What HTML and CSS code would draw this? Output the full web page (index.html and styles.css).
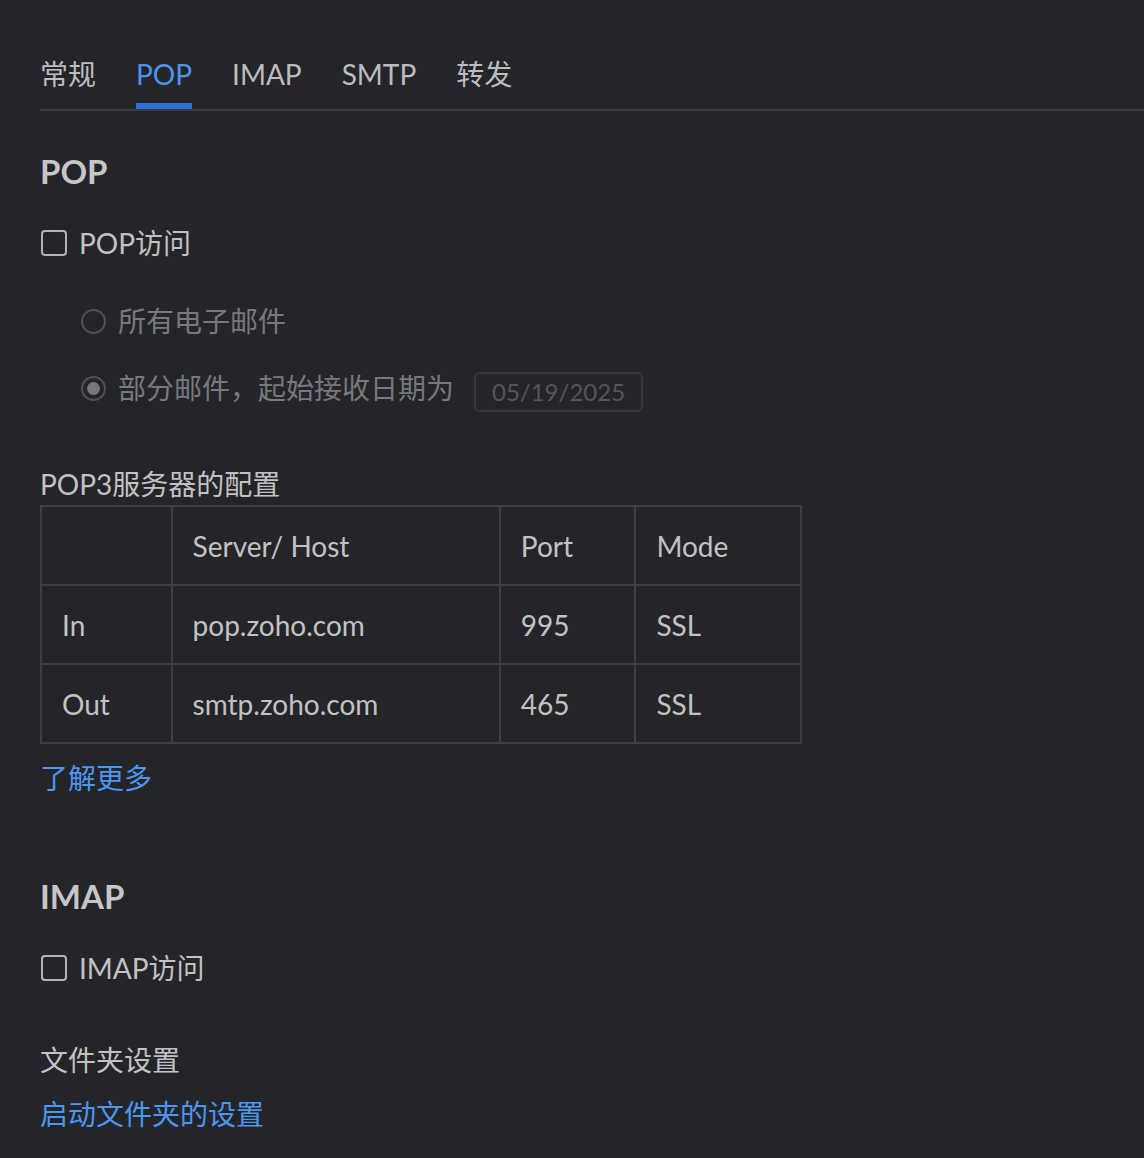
FILE: index.html
```html
<!DOCTYPE html>
<html lang="zh-CN">
    <head>
        <meta charset="UTF-8">
        <meta name="viewport" content="width=device-width, initial-scale=1.0">
        <title>POP / IMAP</title>
        <link rel="stylesheet" href="styles.css">
    </head>
    <body>
        <div class="page">
            <nav class="tabs">
                <span class="tab">常规</span>
                <span class="tab active">POP</span>
                <span class="tab">IMAP</span>
                <span class="tab">SMTP</span>
                <span class="tab">转发</span>
            </nav>

            <h2 class="section-title">POP</h2>
            <label class="check-row">
                <span class="checkbox"></span>
                <span>POP访问</span>
            </label>

            <div class="radio-row first">
                <span class="radio"></span>
                <span>所有电子邮件</span>
            </div>
            <div class="radio-row">
                <span class="radio checked"></span>
                <span>部分邮件，起始接收日期为</span>
                <span class="date-box">05/19/2025</span>
            </div>

            <p class="table-label">POP3服务器的配置</p>
            <table class="server-table">
                <colgroup>
                    <col class="c1">
                    <col class="c2">
                    <col class="c3">
                    <col class="c4">
                </colgroup>
                <tr>
                    <td></td>
                    <td>Server/ Host</td>
                    <td>Port</td>
                    <td>Mode</td>
                </tr>
                <tr>
                    <td>In</td>
                    <td>pop.zoho.com</td>
                    <td>995</td>
                    <td>SSL</td>
                </tr>
                <tr>
                    <td>Out</td>
                    <td>smtp.zoho.com</td>
                    <td>465</td>
                    <td>SSL</td>
                </tr>
            </table>
            <a class="link learn-more" href="#">了解更多</a>

            <h2 class="section-title imap">IMAP</h2>
            <label class="check-row">
                <span class="checkbox"></span>
                <span>IMAP访问</span>
            </label>

            <p class="folder-label">文件夹设置</p>
            <a class="link folder-link" href="#">启动文件夹的设置</a>
        </div>
    </body>
</html>
```

FILE: styles.css
```css
/* Global */
body {
    margin: 0;
    background: #242528;
    color: #c2c2c4;
    font-family: Lato, "Noto Sans CJK SC", sans-serif;
    font-size: 28px;
    line-height: 40px;
}

.page {
    padding: 54px 0 20px 40px;
}

/* Tabs */
.tabs {
    display: flex;
    gap: 40px;
    border-bottom: 2px solid #3a3b3e;
}

.tab {
    color: #bcbcbe;
    padding-bottom: 9px;
    border-bottom: 6px solid transparent;
}

.tab.active {
    color: #4d95ec;
    border-bottom-color: #2a74d9;
}

/* Headings */
.section-title {
    margin: 40px 0 0;
    font-size: 33px;
    font-weight: bold;
    line-height: 40px;
    color: #c6c6c8;
}

.section-title.imap {
    margin-top: 78px;
}

/* Checkbox rows */
.check-row {
    display: flex;
    align-items: center;
    gap: 12px;
    margin-top: 32px;
}

.checkbox {
    width: 22px;
    height: 22px;
    margin-left: 1px;
    border: 2px solid #b4b4b6;
    border-radius: 4px;
}

/* Radio rows */
.radio-row {
    display: flex;
    align-items: center;
    gap: 12px;
    margin-top: 27px;
    padding-left: 41px;
    color: #78797c;
}

.radio-row.first {
    margin-top: 38px;
}

.radio {
    width: 21px;
    height: 21px;
    border: 2px solid #505154;
    border-radius: 50%;
    display: flex;
    align-items: center;
    justify-content: center;
}

.radio.checked::after {
    content: "";
    width: 13px;
    height: 13px;
    border-radius: 50%;
    background: #77787b;
}

.date-box {
    margin: 4px 0 -4px 8px;
    height: 36px;
    padding: 0 16px;
    border: 2px solid #36373a;
    border-radius: 5px;
    font-size: 24px;
    line-height: 36px;
    color: #55565a;
}

/* Table */
.table-label {
    margin: 56px 0 1px;
}

.server-table {
    border-collapse: collapse;
    width: 762px;
}

.server-table td {
    border: 2px solid #3e3f42;
    height: 77px;
    padding: 0 0 0 20px;
}

.c1 { width: 131px; }
.c2 { width: 329px; }
.c3 { width: 136px; }
.c4 { width: 166px; }

/* Links */
.link {
    display: block;
    color: #4d96f2;
    text-decoration: none;
}

.learn-more {
    margin-top: 14px;
}

.folder-label {
    margin: 52px 0 0;
}

.folder-link {
    margin-top: 14px;
}
```
